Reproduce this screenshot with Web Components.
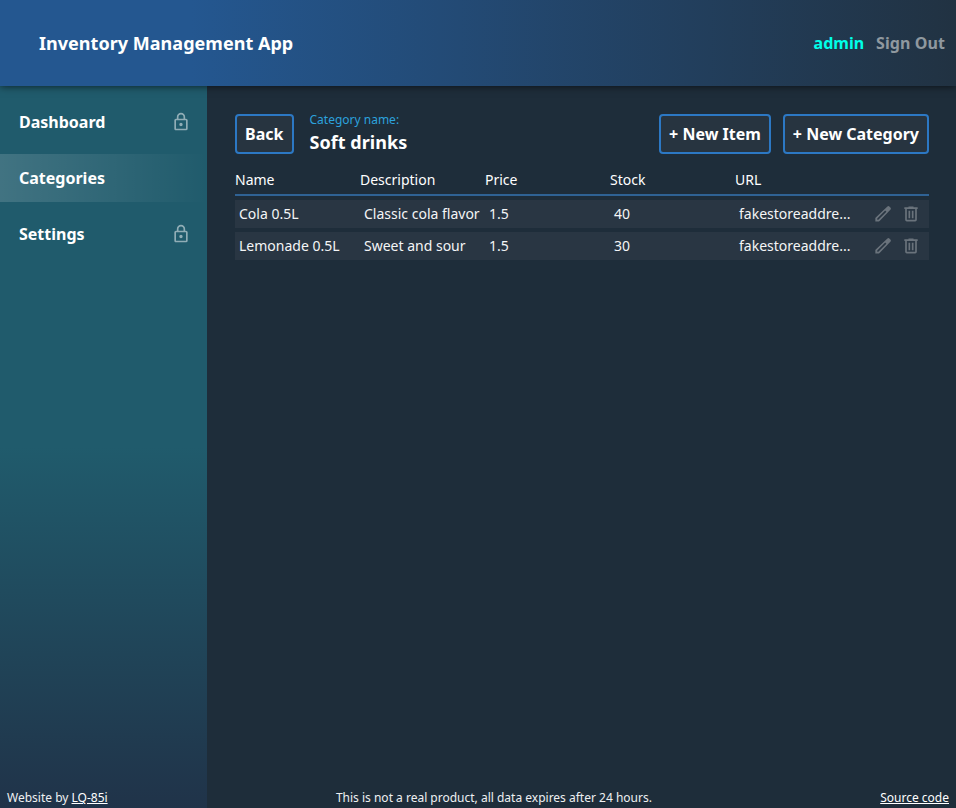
<!DOCTYPE html>
<html lang="en">
<head>
<meta charset="utf-8">
<title>Inventory Management App</title>
<style>
html,body{margin:0;height:100%}
body{font-family:"Noto Sans",sans-serif;color:#fff;background:#1e2d3a;overflow:hidden}
</style>
</head>
<body>
<inventory-app></inventory-app>
<script>
const define = (name, html, init) => customElements.define(name, class extends HTMLElement {
  constructor() {
    super();
    const t = document.createElement('template');
    t.innerHTML = html;
    this.attachShadow({mode: 'open'}).append(t.content.cloneNode(true));
  }
  connectedCallback() { if (init) init(this); }
});

const icons = {
  lock: 'M12,17C10.89,17 10,16.1 10,15C10,13.89 10.89,13 12,13A2,2 0 0,1 14,15A2,2 0 0,1 12,17M18,20V10H6V20H18M18,8A2,2 0 0,1 20,10V20A2,2 0 0,1 18,22H6C4.89,22 4,21.1 4,20V10C4,8.89 4.89,8 6,8H7V6A5,5 0 0,1 12,1A5,5 0 0,1 17,6V8H18M12,3A3,3 0 0,0 9,6V8H15V6A3,3 0 0,0 12,3Z',
  pencil: 'M17.3,2.9Q18.5,2 19.6,2.9L21.1,4.4Q21.9,5.5 21.1,6.7L8.2,20.2L7.2,21H2.8V16.8L3.6,15.8ZM14.6,7.8L5.1,17.5V18.9H6.4L16.1,9.4Z',
  trash: 'M9,3V4H4V6H5V19A2,2 0 0,0 7,21H17A2,2 0 0,0 19,19V6H20V4H15V3H9M7,6H17V19H7V6M9,8V17H11V8H9M13,8V17H15V8H13Z'
};

define('app-icon', `<style>
  :host{display:block;width:20px;height:20px;flex:none;color:#fff;opacity:.5}
  :host([dim]){opacity:.3}
  svg{display:block}
</style><svg width="20" height="20" viewBox="0 0 24 24"><path fill="currentColor" fill-rule="evenodd"/></svg>`,
  el => el.shadowRoot.querySelector('path').setAttribute('d', icons[el.getAttribute('name')]));

define('app-header', `<style>
  :host{display:flex;align-items:center;justify-content:space-between;box-sizing:border-box;height:86px;
    padding:0 11px 0 39px;font-weight:700;background:linear-gradient(90deg,#245790 20%,#213242);
    box-shadow:0 0 8px rgba(0,0,0,.7);z-index:1}
  .title{font-size:18px;letter-spacing:.03px}
  .user{display:flex;gap:12px;font-size:16px}
  .name{color:#00ffe8}.out{color:#8f989f;letter-spacing:.08px}
</style><span class="title">Inventory Management App</span>
<div class="user"><span class="name">admin</span><span class="out">Sign Out</span></div>`);

define('nav-item', `<style>
  :host{display:flex;align-items:center;justify-content:space-between;box-sizing:border-box;height:48px;
    padding:0 16px 0 19px;font-size:16px;font-weight:700}
  :host([active]){background:linear-gradient(90deg,rgba(255,255,255,.15),rgba(255,255,255,0))}
</style><slot></slot><slot name="icon"></slot>`);

define('app-sidebar', `<style>
  :host{display:flex;flex-direction:column;gap:8px;box-sizing:border-box;width:207px;padding-top:12px;
    background:linear-gradient(180deg,#205b6c 50%,#203349)}
</style>
<nav-item>Dashboard<app-icon slot="icon" name="lock"></app-icon></nav-item>
<nav-item active>Categories</nav-item>
<nav-item>Settings<app-icon slot="icon" name="lock"></app-icon></nav-item>`);

define('app-button', `<style>
  :host{display:flex;align-items:center;box-sizing:border-box;height:40px;padding:0 8px;border:2px solid #2c78c4;
    border-radius:4px;background:#273440;font-size:16px;font-weight:700;white-space:nowrap}
</style><slot></slot>`);

define('item-row', `<style>
  :host{display:grid;grid-template-columns:repeat(5,125px) 1fr;align-items:center;height:28px;
    background:#293643;color:#f4f5f6;font-size:14px;line-height:20px}
  ::slotted(span){padding-left:4px;white-space:nowrap}
  .tools{display:flex;gap:8px;justify-content:flex-end;padding-right:8px}
</style><slot></slot><div class="tools"><app-icon dim name="pencil"></app-icon><app-icon dim name="trash"></app-icon></div>`);

define('category-view', `<style>
  :host{display:block;box-sizing:border-box;padding:28px 27px 0 28px}
  .bar{display:flex;gap:12px;height:40px}
  .back{width:59px}
  .cat{flex:1;padding-left:3.5px}
  .label{font-size:12px;line-height:16px;margin-top:-2px;color:#2ca2dd}
  .value{font-size:18px;line-height:25px;margin-top:2px;font-weight:700;letter-spacing:.04px}
  .head{display:grid;grid-template-columns:repeat(5,125px);box-sizing:border-box;height:42px;padding-top:16px;
    border-bottom:2px solid #2f6294;font-size:14px;line-height:20px}
  .rows{display:flex;flex-direction:column;gap:4px;padding-top:4px}
</style>
<div class="bar"><app-button class="back">Back</app-button>
<div class="cat"><div class="label">Category name:</div><div class="value">Soft drinks</div></div>
<app-button>+ New Item</app-button><app-button>+ New Category</app-button></div>
<div class="head"><span>Name</span><span>Description</span><span>Price</span><span>Stock</span><span>URL</span></div>
<div class="rows">
<item-row><span>Cola 0.5L</span><span>Classic cola flavor</span><span>1.5</span><span>40</span><span>fakestoreaddre...</span></item-row>
<item-row><span>Lemonade 0.5L</span><span>Sweet and sour</span><span>1.5</span><span>30</span><span>fakestoreaddre...</span></item-row>
</div>`);

define('app-footer', `<style>
  :host{position:absolute;left:0;right:0;bottom:0;z-index:2;display:flex;justify-content:space-between;
    padding:0 7px 2px;font-size:12px;line-height:17px;color:#eef0f2}
  u{color:#fff}
</style><span>Website by <u>LQ-85i</u></span><span>This is not a real product, all data expires after 24 hours.</span><u>Source code</u>`);

define('inventory-app', `<style>
  :host{display:grid;grid-template:86px 1fr / 207px 1fr;height:100vh;position:relative}
  app-header{grid-column:1 / -1}
</style><app-header></app-header><app-sidebar></app-sidebar><category-view></category-view><app-footer></app-footer>`);
</script>
</body>
</html>
